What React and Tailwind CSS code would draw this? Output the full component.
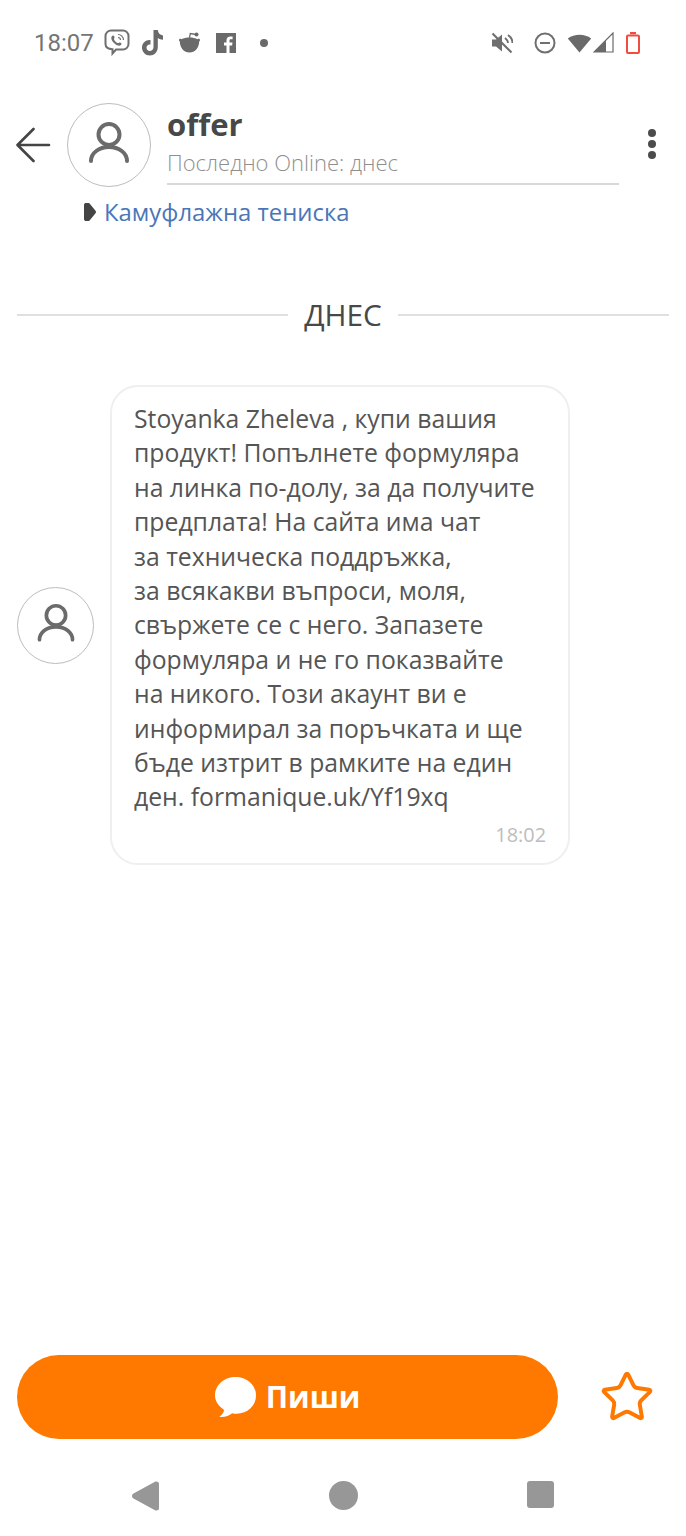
import { Star } from "lucide-react";

const lines = [
  "Stoyanka Zheleva , купи вашия",
  "продукт! Попълнете формуляра",
  "на линка по-долу, за да получите",
  "предплата! На сайта има чат",
  "за техническа поддръжка,",
  "за всякакви въпроси, моля,",
  "свържете се с него. Запазете",
  "формуляра и не го показвайте",
  "на никого. Този акаунт ви е",
  "информирал за поръчката и ще",
  "бъде изтрит в рамките на един",
  "ден. formanique.uk/Yf19xq",
];

function Person({ size }) {
  return (
    <svg width={size} height={size} viewBox="0 0 48 48" fill="none" stroke="#6b6b6b" strokeWidth="4" strokeLinecap="round">
      <circle cx="24" cy="13.500" r="10.500" />
      <path d="M6 40c0-8 8-14 18-14s18 6 18 14" />
    </svg>
  );
}

function Avatar({ size, icon }) {
  return (
    <div
      className={`shrink-0 rounded-full border border-[#bdbdbd] flex items-center justify-center ${
        size === "lg" ? "w-[84px] h-[84px]" : "w-[77px] h-[77px]"
      }`}
    >
      <Person size={icon} />
    </div>
  );
}

function StatusBar() {
  return (
    <div className="h-[85px] pl-[34px] pr-[46px] flex items-center justify-between text-[#6f6f6f]">
      <div className="flex items-center">
        <span className="text-[24px] leading-none font-['Roboto',sans-serif] text-[#757575]">18:07</span>
        {/* viber */}
        <svg className="ml-[10px]" width="26" height="27" viewBox="0 0 26 27" fill="none" stroke="#6f6f6f" strokeWidth="2">
          <path d="M7 1.500h12c3 0 5.500 2.500 5.500 5.500v8c0 3-2.500 5.500-5.500 5.500h-7l-3.500 4v-4.300C4 20 1.500 18 1.500 15V7C1.500 4 4 1.500 7 1.500z" />
          <path d="M8 7c1-1 2-.5 2.500 1 .3 1-.8 1.300-.5 2.300.6 1.800 2 3.200 3.700 3.800 1 .3 1.300-.8 2.300-.5 1.500.5 2 1.500 1 2.500-1.500 1.500-4 .6-6.500-1.500C7.500 12 6.500 8.500 8 7z" fill="#6f6f6f" stroke="none" />
          <path d="M14 5.500c3 0 5.500 2.500 5.500 5.500M14 8.500c1.500 0 2.500 1 2.500 2.500" strokeWidth="1.200" />
        </svg>
        {/* tiktok */}
        <svg className="ml-[11px]" width="24" height="26" viewBox="0 0 24 26" fill="#6a6a6a">
          <path d="M12.500 0h4.300c.3 3 2 5 5.200 5.400v4.300c-2 0-3.700-.6-5.200-1.700V17c0 5-3.700 8.500-8 8.500S1 22 1 17.500 4.800 9.500 9.500 10v4.500c-2.300-.5-4 1-4 3s1.500 3.500 3.300 3.500 3.700-1.300 3.700-4z" />
        </svg>
        {/* reddit */}
        <svg className="ml-[13px]" width="23" height="21" viewBox="0 0 23 21" fill="#6a6a6a">
          <path d="M1 8c0-1 1.500-1.500 2.500-.8C5.500 6 8.500 5.500 11.500 5.500s6 .5 8 1.700c1-.7 2.500-.2 2.500.8 0 .8-.4 1.200-.8 1.500C21 16 17 20.500 11.500 20.500S2 16 1.800 9.500C1.400 9.200 1 8.800 1 8z" />
          <circle cx="18.500" cy="2.500" r="2" />
          <path d="M11.500 6L12.300 1.500 18 2.500" fill="none" stroke="#6a6a6a" strokeWidth="1.300" />
        </svg>
        {/* facebook square */}
        <svg className="ml-[15px]" width="20" height="20" viewBox="0 0 20 20">
          <rect width="20" height="20" fill="#6a6a6a" />
          <path d="M13.500 20v-7.500h2.600l.4-3h-3V7.600c0-.9.300-1.400 1.500-1.400h1.600V3.500c-.3 0-1.200-.1-2.300-.1-2.300 0-3.800 1.400-3.800 3.900v2.200H8v3h2.500V20z" fill="#fff" />
        </svg>
        <span className="ml-[24px] w-[8px] h-[8px] rounded-full bg-[#6a6a6a]" />
      </div>
      <div className="flex items-center">
        {/* muted */}
        <svg width="22" height="22" viewBox="0 0 22 22" fill="none" stroke="#6f6f6f">
          <path d="M1 7.500h4l6-5v17l-6-5H1z" fill="#6f6f6f" stroke="none" />
          <path d="M14 6c2 1.500 3 3 3 5M17 3c3 2 4.500 5 4.500 8" strokeWidth="2" />
          <path d="M1.500 1.500l19 19" strokeWidth="2.200" />
        </svg>
        {/* dnd */}
        <svg className="ml-[21px]" width="22" height="22" viewBox="0 0 22 22" fill="none" stroke="#6f6f6f" strokeWidth="2">
          <circle cx="11" cy="11" r="9.500" />
          <path d="M6 11h10" />
        </svg>
        {/* wifi */}
        <svg className="ml-[11px]" width="25" height="20" viewBox="0 0 25 20" fill="#6a6a6a">
          <path d="M12.500 19.500L.8 5.500C7.500 .5 17.500 .5 24.200 5.500z" />
        </svg>
        {/* signal */}
        <svg className="ml-[1px]" width="21" height="21" viewBox="0 0 21 21" fill="none">
          <path d="M20 1v19H1z" stroke="#6a6a6a" strokeWidth="1.200" />
          <path d="M13 8.500V20H1z" fill="#6a6a6a" />
        </svg>
        {/* battery */}
        <svg className="ml-[12px]" width="14" height="22" viewBox="0 0 14 22" fill="none" stroke="#f24b40" strokeWidth="2">
          <rect x="1" y="3.500" width="12" height="17.500" rx="1" />
          <path d="M4 1h6" strokeWidth="2.500" />
        </svg>
      </div>
    </div>
  );
}

export default function App() {
  return (
    <div className="w-[686px] h-[1536px] bg-white flex flex-col overflow-hidden font-['Open_Sans',sans-serif] text-[#4c4c4c]">
      <StatusBar />

      <div className="flex items-start pt-[18px] pl-[16px] pr-[24px]">
        <svg className="mt-[24px] shrink-0" width="35" height="36" viewBox="0 0 35 36" fill="none" stroke="#444444" strokeWidth="2.600" strokeLinecap="round" strokeLinejoin="round">
          <path d="M33 18H2M17.500 2L1.500 18l16 16" />
        </svg>
        <div className="ml-[16px]">
          <Avatar size="lg" icon={48} />
        </div>
        <div className="ml-[16px] w-[452px] h-[82px] border-b-2 border-[#d9d9d9]">
          <div className="text-[31px] leading-[36px] mt-[3px] font-bold text-[#484848]">offer</div>
          <div className="text-[22px] leading-[30px] mt-[5px] font-light text-[#8f8f8f]">Последно Online: днес</div>
        </div>
        <div className="ml-[29px] mt-[26px] flex flex-col gap-[3px]">
          <span className="w-[8px] h-[8px] rounded-full bg-[#4c4c4c]" />
          <span className="w-[8px] h-[8px] rounded-full bg-[#4c4c4c]" />
          <span className="w-[8px] h-[8px] rounded-full bg-[#4c4c4c]" />
        </div>
      </div>

      <div className="flex items-center pl-[84px] h-[34px] mt-[8px]">
        <svg width="12" height="18" viewBox="0 0 12 18" fill="#444444">
          <path d="M0 2c0-1.500 1-2 2-2h2c1 0 1.500.3 2 1l5.500 6.800c.6.700.6 1.700 0 2.400L6 17c-.5.700-1 1-2 1H2c-1 0-2-.5-2-2z" />
        </svg>
        <a className="ml-[8px] text-[23.900px] leading-[34px] text-[#4a76b8]">Камуфлажна тениска</a>
      </div>

      <div className="flex items-center gap-[16px] px-[17px] mt-[68px] h-[36px]">
        <div className="flex-1 h-[2px] bg-[#e0e0e0]" />
        <div className="text-[29.800px] leading-[36px] text-[#484848]">ДНЕС</div>
        <div className="flex-1 h-[2px] bg-[#e0e0e0]" />
      </div>

      <div className="flex items-center pl-[17px] mt-[52px]">
        <Avatar size="sm" icon={44} />
        <div className="ml-[16px] w-[460px] h-[480px] rounded-[28px] border-2 border-[#efefef] pl-[22px] pr-[22px] pt-[15px]">
          <div className="text-[24.750px] leading-[34.400px] text-[#555555] whitespace-nowrap">
            {lines.map((l) => (
              <div key={l}>{l}</div>
            ))}
          </div>
          <div className="text-right text-[19.900px] leading-[26px] mt-[7px] text-[#bdbdbd]">18:02</div>
        </div>
      </div>

      <div className="flex items-center pl-[17px] mt-auto">
        <button className="w-[541px] h-[84px] rounded-full bg-[#ff7900] flex items-center justify-center text-white">
          <svg width="41" height="41" viewBox="3 2 38 38" fill="#fff">
            <path d="M22 2c10 0 19 7 19 17s-8 17-18 17c-2 0-3 0-4-.5C16 38 12 39.500 7 39c2-1.500 4-4 4.500-6.500C6 29 3 24.500 3 19 3 9 12 2 22 2z" />
          </svg>
          <span className="ml-[10px] text-[30px] leading-none font-bold">Пиши</span>
        </button>
        <Star size={56} strokeWidth={1.700} color="#ff7900" className="ml-[41px]" />
      </div>

      <div className="h-[97px] flex items-start pt-[42px] pl-[132px]">
        <svg width="28" height="30" viewBox="0 0 28 30" fill="#979797">
          <path d="M1.500 12.500L23 .8c2-.9 4 0 4 2.200v24c0 2.200-2 3.100-4 2.200L1.500 17.500c-2-1.200-2-3.800 0-5z" />
        </svg>
        <span className="ml-[169px] w-[29px] h-[29px] rounded-full bg-[#979797]" />
        <span className="ml-[169px] w-[27px] h-[27px] rounded-[3px] bg-[#979797]" />
      </div>
    </div>
  );
}
